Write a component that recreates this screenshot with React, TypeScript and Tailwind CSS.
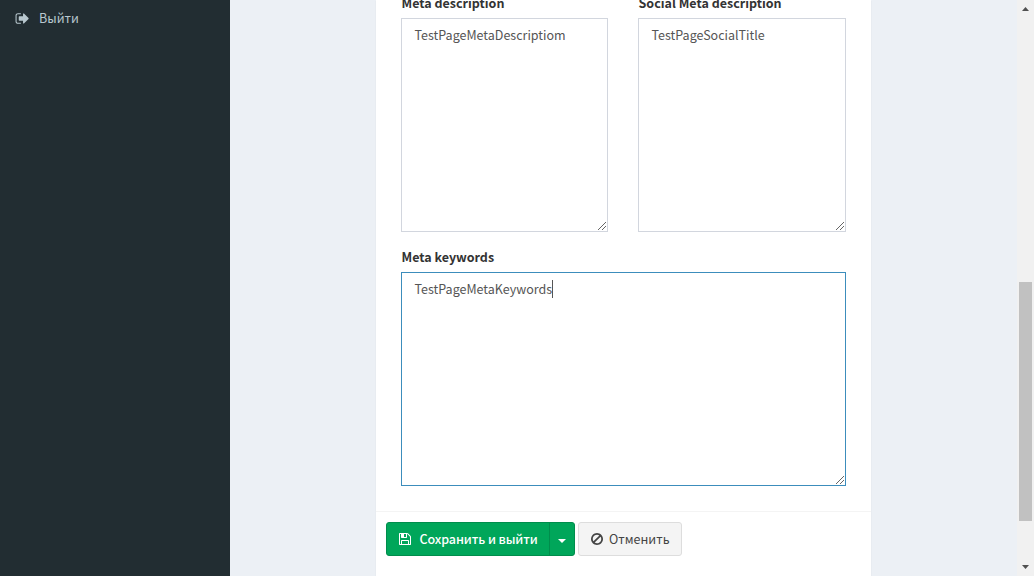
import React from "react";

function Icon({ d, className }: { d: string; className: string }) {
  return (
    <svg viewBox="0 0 1792 1792" fill="currentColor" className={className}>
      <path d={d} />
    </svg>
  );
}

const signOut =
  "M704 1440q0 4 1 20t.5 26.5-3 23.5-10 19.5-20.5 6.5h-320q-119 0-203.5-84.5t-84.5-203.5v-704q0-119 84.5-203.5t203.5-84.5h320q13 0 22.5 9.5t9.5 22.5q0 4 1 20t.5 26.5-3 23.5-10 19.5-20.5 6.5h-320q-66 0-113 47t-47 113v704q0 66 47 113t113 47h312l11.5 1 11.5 3 8 5.5 7 9 2 13.5zm928-544q0 26-19 45l-544 544q-19 19-45 19t-45-19-19-45v-288h-448q-26 0-45-19t-19-45v-384q0-26 19-45t45-19h448v-288q0-26 19-45t45-19 45 19l544 544q19 19 19 45z";
const floppy =
  "M512 1536h768v-384h-768v384zm896 0h128v-896q0-14-10-38.5t-20-34.5l-281-281q-10-10-34-20t-39-10v416q0 40-28 68t-68 28h-576q-40 0-68-28t-28-68v-416h-128v1280h128v-416q0-40 28-68t68-28h832q40 0 68 28t28 68v416zm-384-928v-320q0-13-9.5-22.5t-22.5-9.5h-192q-13 0-22.5 9.5t-9.5 22.5v320q0 13 9.5 22.5t22.5 9.5h192q13 0 22.5-9.5t9.5-22.5zm640 32v928q0 40-28 68t-68 28h-1344q-40 0-68-28t-28-68v-1344q0-40 28-68t68-28h928q40 0 88 20t76 48l280 280q28 28 48 76t20 88z";
const ban =
  "M1440 893q0-161-87-295l-754 753q137 89 297 89 111 0 211.5-43.5t173.5-116.5 116-174.5 43-212.5zm-999 299l755-754q-135-91-300-91-148 0-273 73t-198 199-73 274q0 162 89 299zm1223-299q0 157-61 300t-163.5 246-245 164-298.5 61-298.5-61-245-164-163.5-246-61-300 61-299.5 163.5-245.5 245-164 298.5-61 298.5 61 245 164 163.5 245.5 61 299.5z";

function Grip() {
  return (
    <svg viewBox="0 0 8 8" shapeRendering="crispEdges" fill="#666" className="absolute right-[2px] bottom-[2px] h-2 w-2">
      <path d="M7 0h1v1h-1zM6 1h1v1h-1zM5 2h1v1h-1zM4 3h1v1h-1zM3 4h1v1h-1zM2 5h1v1h-1zM1 6h1v1h-1zM0 7h1v1h-1z" />
      <path d="M7 4h1v1h-1zM6 5h1v1h-1zM5 6h1v1h-1zM4 7h1v1h-1z" />
    </svg>
  );
}

function Field({ label, value, focused }: { label: string; value: string; focused?: boolean }) {
  return (
    <div className="flex min-w-0 flex-1 flex-col">
      <label className="mb-[5px] h-5 pl-[0.5px] text-[12.5px] leading-5 font-bold whitespace-nowrap text-[#333]">
        {label}
      </label>
      <div className="relative h-[214px]">
        <textarea
          defaultValue={value}
          spellCheck={false}
          className={`block h-full w-full resize-none rounded-none border bg-white px-[12.5px] py-1.5 text-[12.5px] leading-5 text-[#555] outline-none ${
            focused ? "border-[#3c8dbc]" : "border-[#d2d6de]"
          }`}
        />
        <Grip />
        {focused && <span className="absolute top-[8px] left-[151px] h-[18px] w-px bg-[#555]" />}
      </div>
    </div>
  );
}

export default function App() {
  return (
    <div className="flex h-[576px] w-full overflow-hidden bg-[#ecf0f5] font-['Noto_Sans_CJK_SC','Noto_Sans',sans-serif]">
      <aside className="w-[230px] shrink-0 bg-[#222d32]">
        <a className="flex h-9 items-center pl-[15px] text-[12.5px] text-[#b8c7ce]">
          <Icon d={signOut} className="mr-[9px] h-[15px] w-[15px]" />
          <span>Выйти</span>
        </a>
      </aside>
      <main className="flex min-w-0 flex-1 justify-center">
        <section className="w-[495px] bg-white shadow-[0_1px_1px_rgba(0,0,0,0.1)]">
          <div className="flex h-[511px] flex-col gap-[15px] px-[25px]">
            <div className="-mt-[7px] grid grid-cols-[207px_208px] gap-[30px]">
              <Field label="Meta description" value="TestPageMetaDescriptiom" />
              <Field label="Social Meta description" value="TestPageSocialTitle" />
            </div>
            <div className="flex">
              <Field label="Meta keywords" value="TestPageMetaKeywords" focused />
            </div>
          </div>
          <footer className="flex h-[65px] gap-[3px] border-t border-[#f4f4f4] p-[10px] text-[12.5px]">
            <div className="flex h-[34px] w-[189px] rounded-[3px] border border-[#008d4c] bg-[#00a65a] text-white">
              <button className="flex w-[163px] items-center border-r border-[#008d4c] pl-[11px] font-medium tracking-[-0.1px] whitespace-nowrap">
                <Icon d={floppy} className="mr-[7.5px] h-[14px] w-[14px]" />
                <span>Сохранить и выйти</span>
              </button>
              <button className="flex flex-1 items-center justify-center pt-[3px]">
                <svg viewBox="0 0 8 4" className="h-1 w-2" fill="currentColor">
                  <path d="M0 0H8L4 4Z" />
                </svg>
              </button>
            </div>
            <button className="flex h-[34px] w-[104px] items-center rounded-[3px] border border-[#ddd] bg-[#f4f4f4] pl-[11px] whitespace-nowrap text-[#444]">
              <Icon d={ban} className="mr-[5px] h-[14px] w-[14px]" />
              <span>Отменить</span>
            </button>
          </footer>
        </section>
      </main>
      <div className="flex w-[17px] shrink-0 flex-col items-center bg-[#f1f1f1] pt-[7px] pb-[7px]">
        <svg viewBox="0 0 7 4" className="h-1 w-[7px]" fill="#505050">
          <path d="M3.5 0L7 4H0Z" />
        </svg>
        <div className="mt-[271px] h-[239px] w-[13px] bg-[#c1c1c1]" />
        <svg viewBox="0 0 7 4" className="mt-auto h-1 w-[7px]" fill="#505050">
          <path d="M0 0H7L3.5 4Z" />
        </svg>
      </div>
    </div>
  );
}
